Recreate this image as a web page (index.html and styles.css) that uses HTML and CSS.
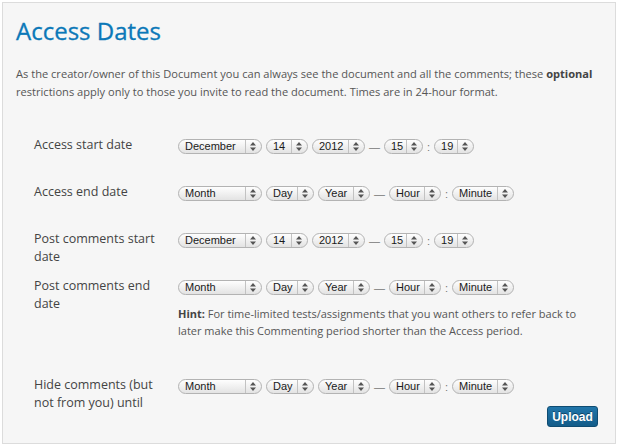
FILE: index.html
```html
<!DOCTYPE html>
<html lang="en">
<head>
    <meta charset="UTF-8">
    <title>Access Dates</title>
    <link rel="stylesheet" href="styles.css">
</head>
<body>
    <div class="panel">
        <h1>Access Dates</h1>
        <p class="intro">As the creator/owner of this Document you can always see the document and all the comments; these <b>optional</b> restrictions apply only to those you invite to read the document. Times are in 24-hour format.</p>

        <div class="field">
            <div class="label">Access start date</div>
            <div class="control">
                <div class="datetime">
                    <span class="sel w-month"><span class="sel-text">December</span><span class="sel-arrows"><svg width="6" height="9" viewBox="0 0 6 9"><path d="M0 3.5L3 0L6 3.5ZM0 5.5L3 9L6 5.5Z"/></svg></span></span>
                    <span class="sel w-dd"><span class="sel-text">14</span><span class="sel-arrows"><svg width="6" height="9" viewBox="0 0 6 9"><path d="M0 3.5L3 0L6 3.5ZM0 5.5L3 9L6 5.5Z"/></svg></span></span>
                    <span class="sel w-yyyy"><span class="sel-text">2012</span><span class="sel-arrows"><svg width="6" height="9" viewBox="0 0 6 9"><path d="M0 3.5L3 0L6 3.5ZM0 5.5L3 9L6 5.5Z"/></svg></span></span>
                    <span class="dash">—</span>
                    <span class="sel w-hh"><span class="sel-text">15</span><span class="sel-arrows"><svg width="6" height="9" viewBox="0 0 6 9"><path d="M0 3.5L3 0L6 3.5ZM0 5.5L3 9L6 5.5Z"/></svg></span></span>
                    <span class="colon">:</span>
                    <span class="sel w-mm"><span class="sel-text">19</span><span class="sel-arrows"><svg width="6" height="9" viewBox="0 0 6 9"><path d="M0 3.5L3 0L6 3.5ZM0 5.5L3 9L6 5.5Z"/></svg></span></span>
                </div>
            </div>
        </div>

        <div class="field">
            <div class="label">Access end date</div>
            <div class="control">
                <div class="datetime">
                    <span class="sel w-month"><span class="sel-text">Month</span><span class="sel-arrows"><svg width="6" height="9" viewBox="0 0 6 9"><path d="M0 3.5L3 0L6 3.5ZM0 5.5L3 9L6 5.5Z"/></svg></span></span>
                    <span class="sel w-day"><span class="sel-text">Day</span><span class="sel-arrows"><svg width="6" height="9" viewBox="0 0 6 9"><path d="M0 3.5L3 0L6 3.5ZM0 5.5L3 9L6 5.5Z"/></svg></span></span>
                    <span class="sel w-year"><span class="sel-text">Year</span><span class="sel-arrows"><svg width="6" height="9" viewBox="0 0 6 9"><path d="M0 3.5L3 0L6 3.5ZM0 5.5L3 9L6 5.5Z"/></svg></span></span>
                    <span class="dash">—</span>
                    <span class="sel w-hour"><span class="sel-text">Hour</span><span class="sel-arrows"><svg width="6" height="9" viewBox="0 0 6 9"><path d="M0 3.5L3 0L6 3.5ZM0 5.5L3 9L6 5.5Z"/></svg></span></span>
                    <span class="colon">:</span>
                    <span class="sel w-minute"><span class="sel-text">Minute</span><span class="sel-arrows"><svg width="6" height="9" viewBox="0 0 6 9"><path d="M0 3.5L3 0L6 3.5ZM0 5.5L3 9L6 5.5Z"/></svg></span></span>
                </div>
            </div>
        </div>

        <div class="field">
            <div class="label">Post comments start date</div>
            <div class="control">
                <div class="datetime">
                    <span class="sel w-month"><span class="sel-text">December</span><span class="sel-arrows"><svg width="6" height="9" viewBox="0 0 6 9"><path d="M0 3.5L3 0L6 3.5ZM0 5.5L3 9L6 5.5Z"/></svg></span></span>
                    <span class="sel w-dd"><span class="sel-text">14</span><span class="sel-arrows"><svg width="6" height="9" viewBox="0 0 6 9"><path d="M0 3.5L3 0L6 3.5ZM0 5.5L3 9L6 5.5Z"/></svg></span></span>
                    <span class="sel w-yyyy"><span class="sel-text">2012</span><span class="sel-arrows"><svg width="6" height="9" viewBox="0 0 6 9"><path d="M0 3.5L3 0L6 3.5ZM0 5.5L3 9L6 5.5Z"/></svg></span></span>
                    <span class="dash">—</span>
                    <span class="sel w-hh"><span class="sel-text">15</span><span class="sel-arrows"><svg width="6" height="9" viewBox="0 0 6 9"><path d="M0 3.5L3 0L6 3.5ZM0 5.5L3 9L6 5.5Z"/></svg></span></span>
                    <span class="colon">:</span>
                    <span class="sel w-mm"><span class="sel-text">19</span><span class="sel-arrows"><svg width="6" height="9" viewBox="0 0 6 9"><path d="M0 3.5L3 0L6 3.5ZM0 5.5L3 9L6 5.5Z"/></svg></span></span>
                </div>
            </div>
        </div>

        <div class="field">
            <div class="label">Post comments end date</div>
            <div class="control">
                <div class="datetime">
                    <span class="sel w-month"><span class="sel-text">Month</span><span class="sel-arrows"><svg width="6" height="9" viewBox="0 0 6 9"><path d="M0 3.5L3 0L6 3.5ZM0 5.5L3 9L6 5.5Z"/></svg></span></span>
                    <span class="sel w-day"><span class="sel-text">Day</span><span class="sel-arrows"><svg width="6" height="9" viewBox="0 0 6 9"><path d="M0 3.5L3 0L6 3.5ZM0 5.5L3 9L6 5.5Z"/></svg></span></span>
                    <span class="sel w-year"><span class="sel-text">Year</span><span class="sel-arrows"><svg width="6" height="9" viewBox="0 0 6 9"><path d="M0 3.5L3 0L6 3.5ZM0 5.5L3 9L6 5.5Z"/></svg></span></span>
                    <span class="dash">—</span>
                    <span class="sel w-hour"><span class="sel-text">Hour</span><span class="sel-arrows"><svg width="6" height="9" viewBox="0 0 6 9"><path d="M0 3.5L3 0L6 3.5ZM0 5.5L3 9L6 5.5Z"/></svg></span></span>
                    <span class="colon">:</span>
                    <span class="sel w-minute"><span class="sel-text">Minute</span><span class="sel-arrows"><svg width="6" height="9" viewBox="0 0 6 9"><path d="M0 3.5L3 0L6 3.5ZM0 5.5L3 9L6 5.5Z"/></svg></span></span>
                </div>
                <p class="hint"><b>Hint:</b> For time-limited tests/assignments that you want others to refer back to later make this Commenting period shorter than the Access period.</p>
            </div>
        </div>

        <div class="field last">
            <div class="label">Hide comments (but not from you) until</div>
            <div class="control">
                <div class="datetime">
                    <span class="sel w-month"><span class="sel-text">Month</span><span class="sel-arrows"><svg width="6" height="9" viewBox="0 0 6 9"><path d="M0 3.5L3 0L6 3.5ZM0 5.5L3 9L6 5.5Z"/></svg></span></span>
                    <span class="sel w-day"><span class="sel-text">Day</span><span class="sel-arrows"><svg width="6" height="9" viewBox="0 0 6 9"><path d="M0 3.5L3 0L6 3.5ZM0 5.5L3 9L6 5.5Z"/></svg></span></span>
                    <span class="sel w-year"><span class="sel-text">Year</span><span class="sel-arrows"><svg width="6" height="9" viewBox="0 0 6 9"><path d="M0 3.5L3 0L6 3.5ZM0 5.5L3 9L6 5.5Z"/></svg></span></span>
                    <span class="dash">—</span>
                    <span class="sel w-hour"><span class="sel-text">Hour</span><span class="sel-arrows"><svg width="6" height="9" viewBox="0 0 6 9"><path d="M0 3.5L3 0L6 3.5ZM0 5.5L3 9L6 5.5Z"/></svg></span></span>
                    <span class="colon">:</span>
                    <span class="sel w-minute"><span class="sel-text">Minute</span><span class="sel-arrows"><svg width="6" height="9" viewBox="0 0 6 9"><path d="M0 3.5L3 0L6 3.5ZM0 5.5L3 9L6 5.5Z"/></svg></span></span>
                </div>
                <div class="actions">
                    <button class="upload">Upload</button>
                </div>
            </div>
        </div>
    </div>
</body>
</html>
```

FILE: styles.css
```css
* {
    box-sizing: border-box;
}

body {
    margin: 2px;
    background: #fff;
    font-family: 'Open Sans', Arial, sans-serif;
    color: #555;
}

.panel {
    width: 614px;
    height: 442px;
    background: #f6f6f6;
    border: 1px solid #dcdcdc;
    padding: 13px 17px 14px 13px;
}

h1 {
    margin: 0;
    font-size: 24px;
    line-height: 30px;
    font-weight: normal;
    color: #0b78b8;
    -webkit-text-stroke: 0.3px #0b78b8;
}

.intro {
    margin: 19px 0 35px 0;
    font-size: 11.1px;
    line-height: 18px;
    color: #555;
}

.intro b {
    color: #444;
}

.field {
    display: flex;
    min-height: 36px;
    margin-bottom: 11px;
}

.label {
    width: 162px;
    padding: 0 16px 0 18px;
    font-size: 12.5px;
    line-height: 18px;
    color: #444;
}

.control {
    flex: 1;
    padding-top: 3px;
}

.datetime {
    display: flex;
    align-items: center;
    gap: 4px;
}

.sel {
    display: inline-flex;
    height: 15px;
    border: 1px solid #b3b3b3;
    border-radius: 8px;
    background: linear-gradient(#fefefe, #e3e3e3);
    font-family: 'Liberation Sans', Arial, sans-serif;
    font-size: 11px;
    line-height: 13px;
    color: #1a1a1a;
}

.sel-text {
    flex: 1;
    padding-left: 6px;
    white-space: nowrap;
    overflow: hidden;
}

.sel-arrows {
    width: 16px;
    border-left: 1px solid #c2c2c2;
    display: flex;
    align-items: center;
    justify-content: center;
    padding-right: 2px;
}

.sel-arrows svg {
    fill: #555;
}

.w-month { width: 84px; }
.w-day { width: 48px; }
.w-year { width: 52px; }
.w-hour { width: 52px; }
.w-minute { width: 62px; }
.w-dd { width: 42px; }
.w-yyyy { width: 53px; }
.w-hh { width: 39px; }
.w-mm { width: 40px; }

.dash,
.colon {
    font-family: 'Liberation Sans', Arial, sans-serif;
    font-size: 11px;
    color: #777;
}

.hint {
    margin: 10px 0 26px 0;
    font-size: 11px;
    line-height: 17px;
    color: #555;
}

.hint b {
    color: #444;
}

.actions {
    display: flex;
    justify-content: flex-end;
    margin-top: 12px;
}

.upload {
    width: 51px;
    height: 21px;
    padding: 0;
    border: 1px solid #0f4c72;
    border-radius: 3px;
    background: linear-gradient(#2176aa, #135c89);
    color: #fff;
    font-family: 'Liberation Sans', Arial, sans-serif;
    font-size: 12px;
    font-weight: bold;
    text-shadow: 0 -1px 0 rgba(0,0,0,0.4);
    cursor: pointer;
}
```
